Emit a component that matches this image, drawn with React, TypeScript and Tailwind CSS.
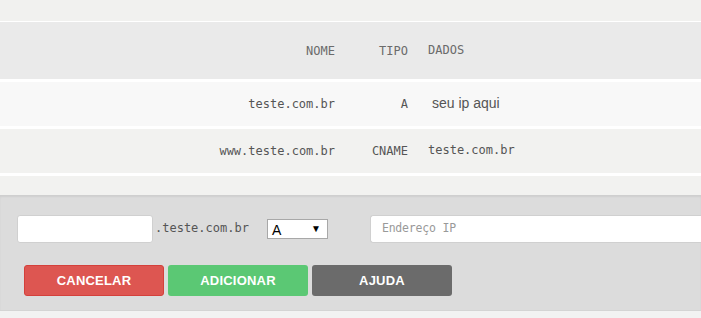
import React from "react";

export default function App() {
  return (
    <div className="w-[701px] h-[318px] overflow-hidden bg-[#f2f2f0] font-['Liberation_Sans',Arial,sans-serif]">
      <div className="h-[21px] bg-[#f1f1ef]" />
      <div className="h-px bg-white" />
      {/* header */}
      <div className="h-[57px] bg-[#eaeaea] flex items-center text-[12px] text-[#6b6b6b] font-['DejaVu_Sans_Mono',monospace]">
        <div className="w-[335px] text-right">NOME</div>
        <div className="w-[73px] text-right">TIPO</div>
        <div className="pl-[20px] -mt-[2px]">DADOS</div>
      </div>
      <div className="h-[3px] bg-white" />
      {/* row 1 */}
      <div className="h-[44px] bg-[#f8f8f8] flex items-center text-[12px] text-[#555] font-['DejaVu_Sans_Mono',monospace]">
        <div className="w-[335px] text-right">teste.com.br</div>
        <div className="w-[73px] text-right">A</div>
        <div className="pl-[24px] -mt-[2px] text-[14px] font-['Liberation_Sans',Arial,sans-serif] text-[#555]">seu ip aqui</div>
      </div>
      <div className="h-[3px] bg-white" />
      {/* row 2 */}
      <div className="h-[44px] bg-[#f2f2f0] flex items-center text-[12px] text-[#555] font-['DejaVu_Sans_Mono',monospace]">
        <div className="w-[335px] text-right">www.teste.com.br</div>
        <div className="w-[73px] text-right">CNAME</div>
        <div className="pl-[20px] -mt-[2px]">teste.com.br</div>
      </div>
      <div className="h-[3px] bg-white" />
      <div className="h-[19px] bg-[#f2f2f0]" />
      {/* bottom panel */}
      <div className="h-[115px] bg-[#dcdcdc] shadow-[inset_0_2px_2px_rgba(0,0,0,0.06)] pt-[20px] pl-[17px]">
        <div className="flex items-center h-[28px]">
          <div className="w-[136px] h-[28px] bg-white border border-[#d0d0d0] rounded-[3px]" />
          <div className="ml-[2px] text-[12px] text-[#555] font-['DejaVu_Sans_Mono',monospace] -mt-[2px]">.teste.com.br</div>
          <div className="ml-[18px] w-[61px] h-[20px] bg-white border border-[#a8a8a8] flex items-center justify-between pl-[4px] pr-[6px]">
            <span className="text-[14px] text-black leading-none mt-[2px]">A</span>
            <span className="text-[10px] text-black leading-none">▼</span>
          </div>
          <div className="ml-[42px] flex-1 h-[28px] bg-white border border-[#d0d0d0] rounded-l-[3px] border-r-0 flex items-center pl-[11px]">
            <span className="text-[11.5px] text-[#999] font-['DejaVu_Sans_Mono',monospace] tracking-[-0.2px]">Endereço IP</span>
          </div>
        </div>
        <div className="flex gap-[4px] mt-[22px] ml-[7px]">
          <button className="w-[140px] h-[31px] rounded-[3px] bg-[#dd5651] border border-[#d4403b] text-white text-[13px] font-bold tracking-[0.2px]">CANCELAR</button>
          <button className="w-[140px] h-[31px] rounded-[3px] bg-[#5bc874] text-white text-[13px] font-bold tracking-[0.2px]">ADICIONAR</button>
          <button className="w-[140px] h-[31px] rounded-[3px] bg-[#6b6b6b] text-white text-[13px] font-bold tracking-[0.2px]">AJUDA</button>
        </div>
      </div>
      <div className="h-px bg-[#d4d4d4]" />
      <div className="h-[7px] bg-[#f2f2f2]" />
    </div>
  );
}
